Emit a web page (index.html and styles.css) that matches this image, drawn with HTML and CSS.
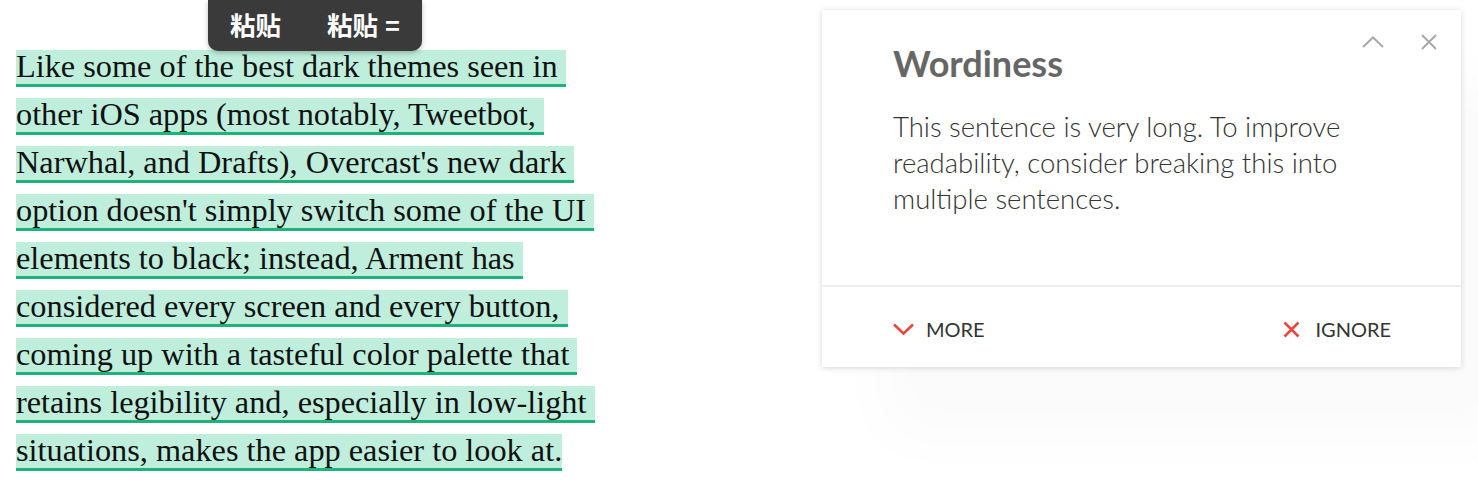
FILE: index.html
```html
<!DOCTYPE html>
<html lang="en">
  <head>
    <meta charset="UTF-8" />
    <title>Wordiness</title>
    <link rel="stylesheet" href="styles.css">
  </head>
  <body>
    <div class="page">
      <div class="editor">
        <div class="toolbar">
          <span class="tool">粘贴</span>
          <span class="tool">粘贴 =</span>
        </div>
        <p class="text">
          <span class="hl">Like some of the best dark themes seen in&nbsp;<br />other iOS apps (most notably, Tweetbot,&nbsp;<br />Narwhal, and Drafts), Overcast's new dark&nbsp;<br />option doesn't simply switch some of the UI&nbsp;<br />elements to black; instead, Arment has&nbsp;<br />considered every screen and every button,&nbsp;<br />coming up with a tasteful color palette that&nbsp;<br />retains legibility and, especially in low-light&nbsp;<br />situations, makes the app easier to look at.</span>
        </p>
      </div>

      <div class="card">
        <div class="card-icons">
          <svg width="22" height="12" viewBox="0 0 22 12">
            <path d="M1 11 L11 1.5 L21 11" fill="none" stroke="#a9a9a9" stroke-width="2" />
          </svg>
          <svg width="16" height="16" viewBox="0 0 16 16">
            <path d="M1 1 L15 15 M15 1 L1 15" fill="none" stroke="#a9a9a9" stroke-width="2" />
          </svg>
        </div>
        <div class="card-body">
          <h2>Wordiness</h2>
          <p>This sentence is very long. To improve readability, consider breaking this into multiple sentences.</p>
        </div>
        <div class="card-footer">
          <button type="button">
            <svg width="21" height="12" viewBox="0 0 21 12">
              <path d="M1 1.5 L10.5 10.5 L20 1.5" fill="none" stroke="#e8473f" stroke-width="2.6" />
            </svg>
            MORE
          </button>
          <button type="button">
            <svg width="17" height="17" viewBox="0 0 17 17">
              <path d="M1.5 1.5 L15.5 15.5 M15.5 1.5 L1.5 15.5" fill="none" stroke="#e8473f" stroke-width="2.6" />
            </svg>
            IGNORE
          </button>
        </div>
      </div>
    </div>
  </body>
</html>
```

FILE: styles.css
```css
body {
  margin: 0;
  background-color: #fff;
  font-family: Lato, "Open Sans", sans-serif;
}
.page {
  display: flex;
  align-items: flex-start;
}
.editor {
  position: relative;
  width: 620px;
  padding-left: 16px;
}
.toolbar {
  position: absolute;
  top: 0;
  left: 208px;
  width: 214px;
  height: 51px;
  box-sizing: border-box;
  padding: 2px 0 0 22px;
  display: flex;
  align-items: center;
  gap: 46px;
  background-color: #3a3a3a;
  border-radius: 0 0 10px 10px;
  box-shadow: 0 2px 5px rgba(0, 0, 0, 0.25);
  z-index: 2;
}
.tool {
  color: #fff;
  font-family: "Liberation Sans", "Noto Sans CJK SC", sans-serif;
  font-weight: 700;
  font-size: 25.5px;
  line-height: 1;
}
.text {
  margin: 42px 0 0;
  font-family: "Liberation Serif", serif;
  font-size: 32.3px;
  line-height: 48px;
  color: #111;
}
.hl {
  background: linear-gradient(#bfeedc, #bfeedc) no-repeat left bottom;
  background-size: 100% 34px;
  border-bottom: 3px solid #1db47a;
}

.card {
  margin: 10px 17px 0 auto;
  width: 639px;
  height: 357px;
  box-sizing: border-box;
  position: relative;
  background-color: #fff;
  box-shadow: 0 1px 6px rgba(0, 0, 0, 0.16), 60px 70px 60px rgba(0, 0, 0, 0.018);
  display: flex;
  flex-direction: column;
}
.card-icons {
  position: absolute;
  top: 24px;
  right: 24px;
  display: flex;
  align-items: center;
  gap: 37px;
}
.card-body {
  padding: 33px 70px 0 71px;
  height: 277px;
  box-sizing: border-box;
  border-bottom: 2px solid #eeeeee;
}
.card-body h2 {
  margin: 0;
  font-size: 36px;
  line-height: 40px;
  font-weight: 700;
  color: #666;
}
.card-body p {
  margin: 26px 0 0;
  font-size: 27.5px;
  line-height: 36px;
  font-weight: 300;
  color: #333;
}
.card-footer {
  flex: 1;
  display: flex;
  align-items: center;
  justify-content: space-between;
  padding: 4px 70px 0 71px;
}
.card-footer button {
  display: flex;
  align-items: center;
  gap: 12px;
  padding: 0;
  border: none;
  background: none;
  font-family: Lato, sans-serif;
  font-size: 20px;
  color: #333;
  cursor: pointer;
}
.card-footer button:last-child {
  gap: 15px;
}
```
